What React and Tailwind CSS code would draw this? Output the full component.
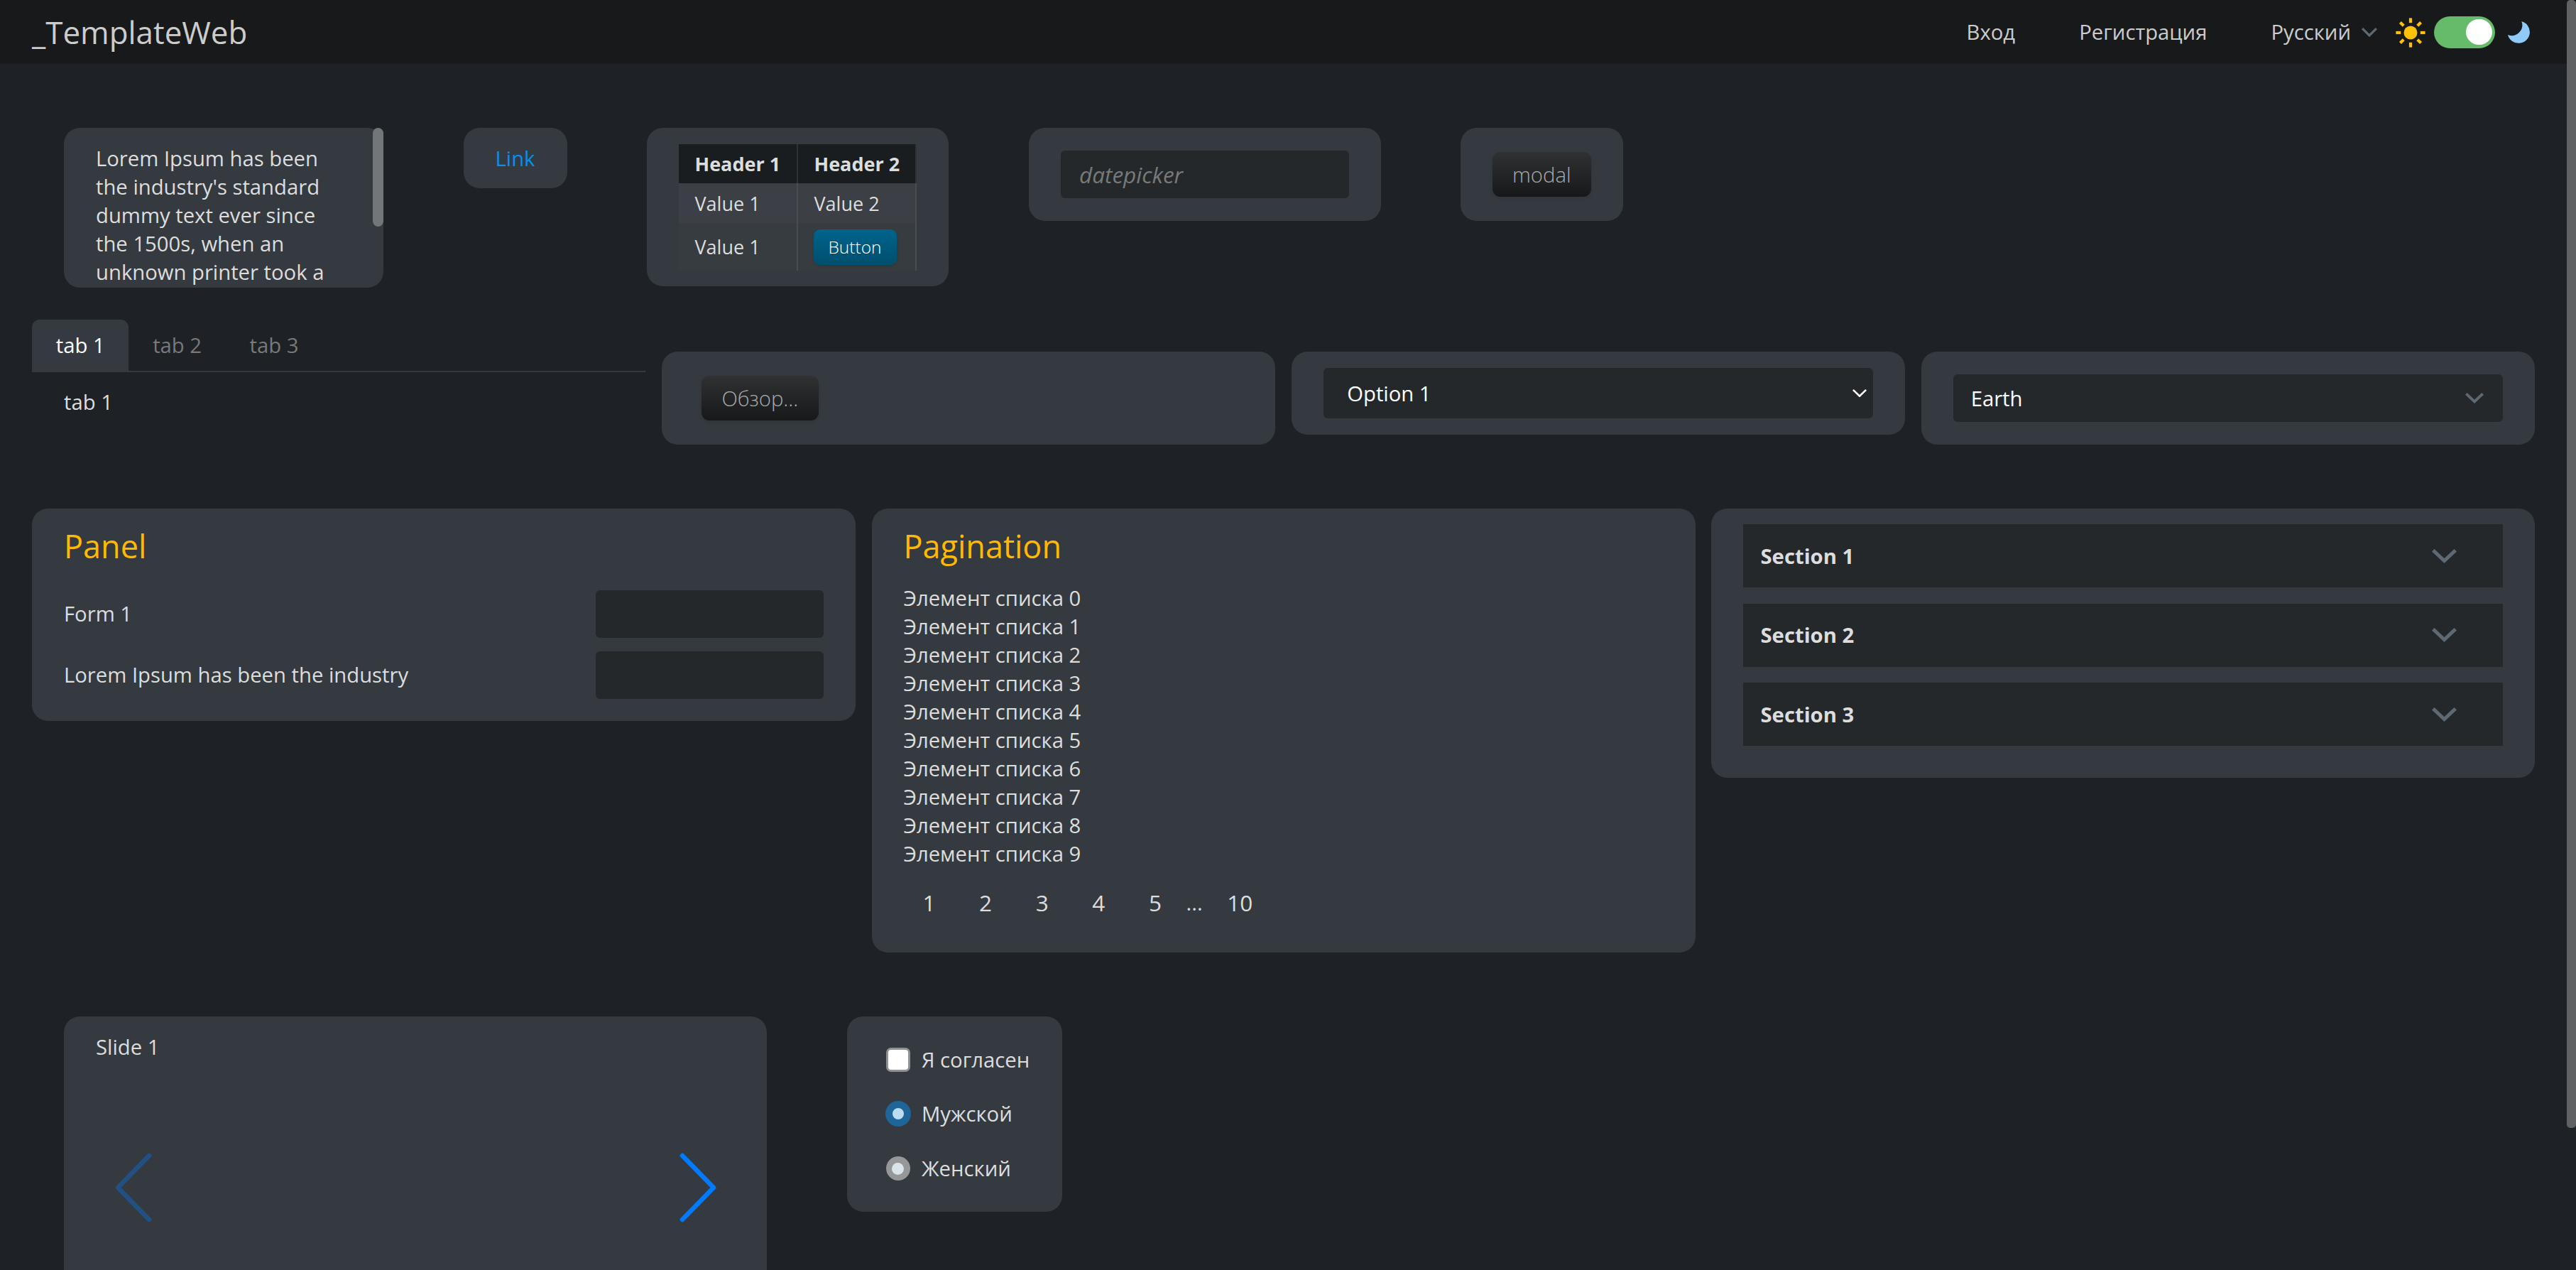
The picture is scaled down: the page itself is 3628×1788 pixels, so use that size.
import React from "react";

const card = "rounded-[22.5px] bg-[#343a3f]";
const darkButton =
  "flex h-[63px] items-center rounded-[11px] bg-linear-to-b from-[#303132] to-[#171819] px-[28.5px] font-light text-[#aaaaaa] shadow-[0_2px_4px_rgba(0,0,0,0.1)]";

function Chevron({ width, height, stroke, className }) {
  const inset = stroke * 0.354;
  return (
    <svg width={width} height={height} viewBox={`0 0 ${width} ${height}`} fill="none" className={className}>
      <path
        d={`M${inset} ${inset}L${width / 2} ${height - stroke * 0.707}L${width - inset} ${inset}`}
        stroke="currentColor"
        strokeWidth={stroke}
      />
    </svg>
  );
}

function Sun() {
  return (
    <svg width="42" height="42" viewBox="-21 -21 42 42" fill="#ffc107" className="shrink-0">
      <circle r="9.5" />
      {[0, 45, 90, 135, 180, 225, 270, 315].map((a) => (
        <rect key={a} x="-2.1" y="-20.6" width="4.2" height="6.8" transform={`rotate(${a})`} />
      ))}
    </svg>
  );
}

function Moon() {
  return (
    <svg width="31" height="31" viewBox="0 0 31 31" fill="#90caf9" className="shrink-0">
      <path d="M19.3 0A15.7 15.7 0 1 1 0 19A14.8 14.8 0 0 0 19.3 0Z" />
    </svg>
  );
}

function Header() {
  return (
    <header className="flex h-[90px] items-center justify-between bg-[#17191a] pr-[65px] pl-[45px] text-[#cccccc]">
      <div className="text-[43.9px] leading-[60px]">_TemplateWeb</div>
      <nav className="flex items-center">
        <a className="mr-[90px]">Вход</a>
        <a className="mr-[90px]">Регистрация</a>
        <div className="flex items-center">
          Русский
          <Chevron width={22} height={13.2} stroke={3.2} className="mt-[2px] ml-[15px] text-[#5f6973]" />
        </div>
        <div className="mt-[1px] ml-[25.5px]">
          <Sun />
        </div>
        <div className="ml-[12.5px] flex h-[45px] w-[86px] items-center justify-end rounded-full bg-[#66bb6a] pr-[4.5px]">
          <div className="size-[36.5px] rounded-full bg-white" />
        </div>
        <div className="ml-[18px]">
          <Moon />
        </div>
      </nav>
    </header>
  );
}

function DataTable() {
  const cell = "border-r-2 px-[22.5px] whitespace-nowrap";
  return (
    <div className={`${card} h-[223px] w-[424.5px] pt-[23px] pl-[45px]`}>
      <table className="w-[335px] table-fixed border-separate border-spacing-0 text-left text-[27px] leading-[37px]">
        <thead>
          <tr className="h-[55px] bg-[#1a1d20] font-bold">
            <th className={`${cell} w-[168px] border-[#2e3337]`}>Header 1</th>
            <th className={`${cell} w-[167px] border-[#2e3337]`}>Header 2</th>
          </tr>
        </thead>
        <tbody>
          <tr className="h-[56px] bg-[#3c4046]">
            <td className={`${cell} border-[#484d52]`}>Value 1</td>
            <td className={`${cell} border-[#484d52]`}>Value 2</td>
          </tr>
          <tr className="h-[67px] bg-[#373c41]">
            <td className={`${cell} border-[#484d52]`}>Value 1</td>
            <td className={`${cell} border-[#484d52]`}>
              <button className="-ml-[1px] flex h-[50px] w-[117px] items-center justify-center rounded-[9px] bg-linear-to-b from-[#00648c] to-[#004f6e] text-[24.5px] leading-[34px] font-light text-white shadow-[0_2px_4px_rgba(0,0,0,0.1)]">
                Button
              </button>
            </td>
          </tr>
        </tbody>
      </table>
    </div>
  );
}

function Widgets() {
  return (
    <section className="mt-[90px] ml-[90px] flex h-[225px] items-start gap-[112.5px]">
      <div className="relative h-[225px] w-[450px]">
        <div className={`${card} h-full overflow-hidden px-[45px] pt-[22.5px]`}>
          <p className="w-[330px]">
            Lorem Ipsum has been the industry's standard dummy text ever since the 1500s, when an unknown printer took a
          </p>
        </div>
        <div className="absolute top-0 right-0 h-[139px] w-[15px] rounded-full bg-[#737678]" />
      </div>
      <div className={`${card} h-[85px] w-[146px] pt-[22.5px] pl-[45px] text-[#0390f0]`}>Link</div>
      <DataTable />
      <div className={`${card} ml-[1px] flex h-[131px] w-[496px] items-center px-[45px]`}>
        <input
          placeholder="datepicker"
          className="h-[67.5px] w-[406px] rounded-[6px] bg-[#24282a] px-[26px] text-[31.5px] leading-[43px] italic placeholder:text-[#77797a]"
        />
      </div>
      <div className={`${card} -ml-[0.5px] flex h-[131px] items-center px-[44.5px]`}>
        <button className={darkButton}>modal</button>
      </div>
    </section>
  );
}

function Tabs() {
  return (
    <div>
      <div className="flex border-b-2 border-[#343a3f]">
        <div className="h-[72px] rounded-t-[11px] bg-[#343a3f] px-[33.75px] pt-[15.5px] text-white">tab 1</div>
        <div className="h-[72px] px-[33.75px] pt-[15.5px] text-[#77797b]">tab 2</div>
        <div className="h-[72px] px-[33.75px] pt-[15.5px] text-[#77797b]">tab 3</div>
      </div>
      <div className="pt-[22px] pl-[45px]">tab 1</div>
    </div>
  );
}

function Controls() {
  return (
    <section className="mt-[45px] ml-[45px] grid h-[176px] w-[3525px] grid-cols-4 items-start gap-[22.5px]">
      <Tabs />
      <div className={`${card} mt-[45px] flex h-[131px] items-center pl-[56px]`}>
        <button className={darkButton}>Обзор...</button>
      </div>
      <div className={`${card} mt-[45px] h-[117px] px-[45px] pt-[22.5px]`}>
        <div className="flex h-[71.5px] items-center justify-between rounded-[6px] bg-[#24282a] pr-[9px] pl-[33.5px] text-white">
          <span className="mt-[1px]">Option 1</span>
          <Chevron width={20} height={11.5} stroke={2.6} />
        </div>
      </div>
      <div className={`${card} mt-[45px] h-[131px] px-[45px] pt-[32px]`}>
        <div className="flex h-[67px] items-center justify-between rounded-[6px] bg-[#24282a] pr-[27px] pl-[25px] text-white">
          <span>Earth</span>
          <Chevron width={26} height={15} stroke={3.8} className="text-[#5f6973]" />
        </div>
      </div>
    </section>
  );
}

function FormRow({ label }) {
  return (
    <div className="flex h-[67px] items-center justify-between">
      <label>{label}</label>
      <input className="h-[67px] w-[321px] rounded-[6px] bg-[#24282a] px-6" />
    </div>
  );
}

function Panels() {
  return (
    <section className="mt-[90px] ml-[45px] grid h-[625px] w-[3525px] grid-cols-3 items-start gap-[22.5px]">
      <div className={`${card} h-[299px] px-[45px] pt-[22px]`}>
        <h2 className="text-[45px] leading-[61px] text-[#ffb900]">Panel</h2>
        <div className="mt-[31.5px] flex flex-col gap-[19px]">
          <FormRow label="Form 1" />
          <FormRow label="Lorem Ipsum has been the industry" />
        </div>
      </div>
      <div className={`${card} h-[625px] px-[45px] pt-[22px]`}>
        <h2 className="text-[45px] leading-[61px] text-[#ffb900]">Pagination</h2>
        <ul className="mt-[22.5px]">
          {[0, 1, 2, 3, 4, 5, 6, 7, 8, 9].map((n) => (
            <li key={n}>Элемент списка {n}</li>
          ))}
        </ul>
        <div className="mt-[27.5px] flex items-center gap-[7.6px]">
          {["1", "2", "3", "4", "5"].map((n) => (
            <a key={n} className="px-[27px] text-[31.5px] leading-[43px]">{n}</a>
          ))}
          <span>...</span>
          <a className="px-[27px] text-[31.5px] leading-[43px]">10</a>
        </div>
      </div>
      <div className={`${card} flex h-[379px] flex-col gap-[22.5px] px-[45px] pt-[22px]`}>
        {["Section 1", "Section 2", "Section 3"].map((s) => (
          <div key={s} className="flex h-[89px] items-center justify-between bg-[#24282a] pr-[65px] pl-[24.5px] font-bold">
            <span>{s}</span>
            <Chevron width={35} height={20} stroke={5} className="text-[#5f6973]" />
          </div>
        ))}
      </div>
    </section>
  );
}

function Arrow({ className, d }) {
  return (
    <svg width="54" height="98" viewBox="0 0 54 98" fill="none" className={className}>
      <path d={d} stroke="#007aff" strokeWidth="6.6" strokeLinecap="round" strokeLinejoin="round" />
    </svg>
  );
}

function Choice({ children, mark, className = "" }) {
  return (
    <label className={`flex h-[40px] items-center ${className}`}>
      <span className="mr-[15.5px] flex w-[36px] justify-center">{mark}</span>
      {children}
    </label>
  );
}

function Bottom() {
  return (
    <section className="mt-[90px] ml-[90px] flex items-start gap-[112.5px]">
      <div className={`${card} h-[500px] w-[990px] pt-[22.5px]`}>
        <div className="pl-[45px]">Slide 1</div>
        <div className="mt-[129.5px] flex justify-between px-[70.5px]">
          <Arrow className="opacity-35" d="M49 4L5 49L49 94" />
          <Arrow d="M5 4L49 49L5 94" />
        </div>
      </div>
      <div className={`${card} h-[275px] w-[303px] pt-[41px] pl-[54px]`}>
        <Choice mark={<span className="size-[34px] rounded-[7px] border-[3.5px] border-[#8f9294] bg-white" />}>Я согласен</Choice>
        <Choice
          className="mt-[36px]"
          mark={
            <span className="flex size-[36px] items-center justify-center rounded-full bg-[#1e6699]">
              <span className="size-[16px] rounded-full bg-[#bcdcf2]" />
            </span>
          }
        >
          Мужской
        </Choice>
        <Choice
          className="mt-[37px]"
          mark={
            <span className="flex size-[34px] items-center justify-center rounded-full bg-[#959799]">
              <span className="size-[17px] rounded-full bg-[#dae5e9]" />
            </span>
          }
        >
          Женский
        </Choice>
      </div>
    </section>
  );
}

export default function App() {
  return (
    <div className="relative h-[1788px] w-[3628px] overflow-hidden bg-[#1e2226] font-['Open_Sans',sans-serif] text-[29.25px] leading-[40px] text-[#dddddd]">
      <Header />
      <Widgets />
      <Controls />
      <Panels />
      <Bottom />
      <div className="absolute top-0 right-0 h-[1588px] w-[13px] rounded-[5px] bg-[#606163]" />
    </div>
  );
}
